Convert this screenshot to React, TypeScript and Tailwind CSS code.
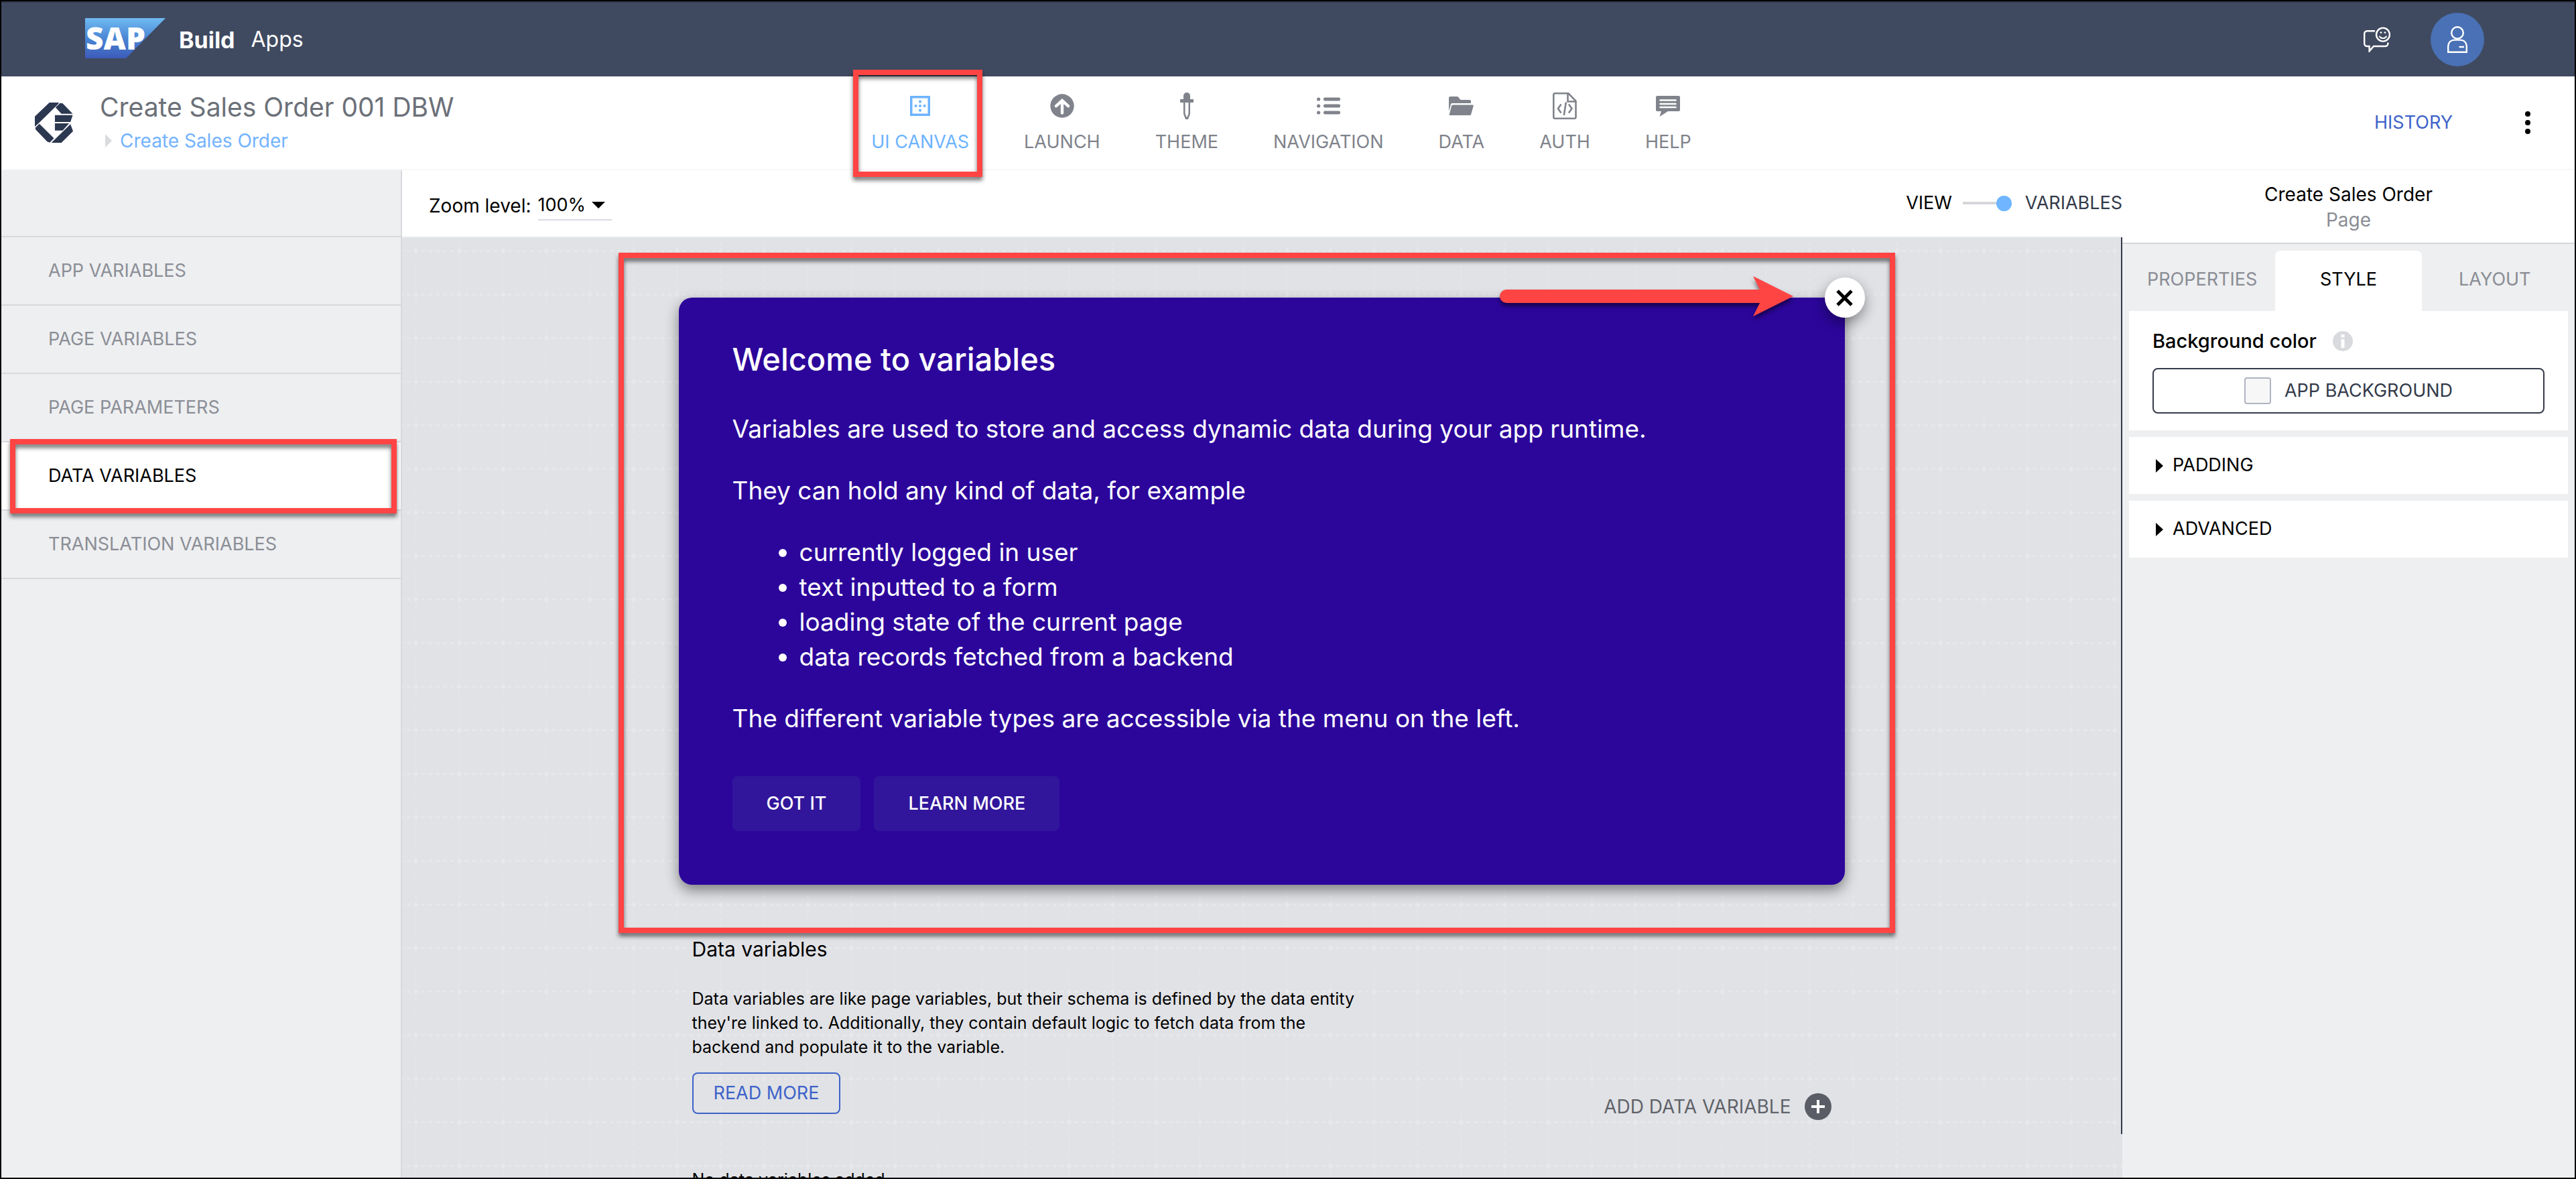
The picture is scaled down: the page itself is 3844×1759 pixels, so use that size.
import React from "react";

const HIGHLIGHT =
  "pointer-events-none absolute z-20 border-8 border-[#ff4444] drop-shadow-[0_5px_3px_rgba(0,0,0,0.55)]";

function SapLogo() {
  return (
    <svg width="120" height="60" viewBox="0 0 120 60" role="img" aria-label="SAP">
      <defs>
        <linearGradient id="sap" x1="0" y1="0" x2="0" y2="1">
          <stop offset="0" stopColor="#70baf3" />
          <stop offset="0.5" stopColor="#4a86d4" />
          <stop offset="1" stopColor="#3d5bba" />
        </linearGradient>
      </defs>
      <polygon points="0,0 120,0 61,60 0,60" fill="url(#sap)" />
      <text x="1" y="47" fontFamily="Open Sans, sans-serif" fontWeight="800" fontSize="46" fill="#fff">
        SAP
      </text>
    </svg>
  );
}

function AppLogo() {
  return (
    <svg width="57" height="60" viewBox="0 0 118 180" preserveAspectRatio="none" fill="#2c3850" aria-hidden="true">
      <polygon points="45,0 75,0 70,10 12,92 0,108 0,62" />
      <polygon points="78,2 86,4 117,50 82,50 64,22" />
      <polygon points="62,56 117,56 110,87 62,87" />
      <polygon points="62,93 106,93 86,125 62,125" />
      <polygon points="110,97 118,128 82,180 51,180" />
      <polygon points="14,95 59,160 46,179 38,175 2,120 2,112" />
    </svg>
  );
}

function FeedbackIcon() {
  return (
    <svg width="40" height="38" viewBox="0 0 40 38" fill="none" stroke="#fff" strokeWidth="2.4" aria-hidden="true">
      <path d="M17 6.2H5.2a4 4 0 0 0-4 4V25a4 4 0 0 0 4 4H8.6v7.4L15 29h17.4a4 4 0 0 0 4-4v-1.5" />
      <circle cx="29" cy="11.6" r="10" />
      <path d="M23.8 13.6c1.4 4.6 9 4.6 10.4 0" strokeWidth="2" />
      <circle cx="26" cy="8.6" r="1.4" fill="#fff" stroke="none" />
      <circle cx="32" cy="8.6" r="1.4" fill="#fff" stroke="none" />
    </svg>
  );
}

function PersonIcon() {
  return (
    <svg width="30" height="40" viewBox="0 0 30 40" fill="none" stroke="#fff" strokeWidth="2.4" aria-hidden="true">
      <circle cx="15" cy="10" r="8.8" />
      <path d="M1.2 38.8V31c0-6.500 4-10.400 10-10.400h7.600c6 0 10 3.900 10 10.400v7.800z" />
      <path d="M17.500 31h7.500" />
    </svg>
  );
}

const icons: Record<string, React.ReactNode> = {
  canvas: (
    <svg width="30" height="30" viewBox="0 0 30 30" fill="currentColor" aria-hidden="true">
      <path fillRule="evenodd" d="M0 0h30v30H0zM3.500 3.500v23h23v-23z" />
      <path d="M13.200 6.800h3.600v3.600h-3.600zM13.200 13.200h3.600v3.600h-3.600zM13.200 19.800h3.600v3.600h-3.600zM6.800 13.200h3.600v3.600H6.800zM19.800 13.200h3.600v3.600h-3.600z" />
    </svg>
  ),
  launch: (
    <svg width="36" height="36" viewBox="0 0 36 36" aria-hidden="true">
      <circle cx="18" cy="18" r="17.700" fill="currentColor" />
      <path d="M18 28.500V11.500M9 18.200l9-8.200 9 8.200" fill="none" stroke="#fff" strokeWidth="4.400" strokeLinecap="round" strokeLinejoin="miter" />
    </svg>
  ),
  theme: (
    <svg width="20" height="40" viewBox="0 0 20 40" fill="currentColor" aria-hidden="true">
      <path d="M5 11V5a5 5 0 0 1 10 0v6z" />
      <rect y="10" width="20" height="5" />
      <path fillRule="evenodd" d="M5 15h10v17l-3 8H8l-3-8zM7.500 15v16.500l2.500 6 2.500-6V15z" />
    </svg>
  ),
  navigation: (
    <svg width="35" height="26" viewBox="0 0 35 26" fill="currentColor" aria-hidden="true">
      {[0.5, 10.5, 20.5].map((y) => (
        <g key={y}>
          <circle cx="2.600" cy={y + 2.5} r="2.600" />
          <rect x="10" y={y} width="25" height="5" rx="2" />
        </g>
      ))}
    </svg>
  ),
  data: (
    <svg width="37" height="28" viewBox="0 0 37 28" fill="currentColor" aria-hidden="true">
      <path d="M0 22V2a2 2 0 0 1 2-2h10a3 3 0 0 1 2.500 1.300L17.500 5H31a2 2 0 0 1 2 2v3H5a2 2 0 0 0-2 1.600z" />
      <path d="M6 12.500h29a1.600 1.600 0 0 1 1.600 2l-3.400 12A2 2 0 0 1 31.500 28H.5L4 14a2 2 0 0 1 2-1.500z" />
    </svg>
  ),
  auth: (
    <svg width="36" height="40" viewBox="0 0 36 40" fill="none" stroke="currentColor" strokeWidth="2.600" aria-hidden="true">
      <path d="M3 1.300h20.500l11 11.500V37a1.700 1.700 0 0 1-1.700 1.700H3A1.700 1.700 0 0 1 1.300 37V3A1.700 1.700 0 0 1 3 1.300z" />
      <path d="M22.500 1.500v12h12" />
      <path d="M12.500 17.500L8 24l4.500 6.500M24 17.500l4.500 6.500-4.500 6.500M19.800 14.500l-3 19.500" />
    </svg>
  ),
  help: (
    <svg width="36" height="31" viewBox="0 0 36 31" aria-hidden="true">
      <path d="M2 0h32a2 2 0 0 1 2 2v19a2 2 0 0 1-2 2H18L5.500 31 8 23H2a2 2 0 0 1-2-2V2a2 2 0 0 1 2-2z" fill="currentColor" />
      <path d="M5.500 6.500h25M5.500 12h25M5.500 17h25" stroke="#fff" strokeWidth="2.400" />
    </svg>
  ),
};

const navItems = [
  { id: "canvas", label: "UI CANVAS" },
  { id: "launch", label: "LAUNCH" },
  { id: "theme", label: "THEME" },
  { id: "navigation", label: "NAVIGATION" },
  { id: "data", label: "DATA" },
  { id: "auth", label: "AUTH" },
  { id: "help", label: "HELP" },
];

const variableTabs = [
  "APP VARIABLES",
  "PAGE VARIABLES",
  "PAGE PARAMETERS",
  "DATA VARIABLES",
  "TRANSLATION VARIABLES",
];

function TopBar() {
  return (
    <header className="flex h-[112px] shrink-0 items-center border-t-2 border-[#33384a] bg-[#3f4a60] pr-[135px] pl-[125px] text-white">
      <div className="pb-1">
        <SapLogo />
      </div>
      <span className="pl-5 text-[34px] font-bold">Build</span>
      <span className="pl-6 text-[32px]">Apps</span>
      <div className="ml-auto flex items-center gap-[60px]">
        <button type="button" aria-label="Feedback">
          <FeedbackIcon />
        </button>
        <button type="button" aria-label="Account" className="flex size-20 items-center justify-center rounded-full bg-[#4a71b5]">
          <PersonIcon />
        </button>
      </div>
    </header>
  );
}

function ProjectBar() {
  return (
    <div className="grid h-[140px] shrink-0 grid-cols-[1fr_auto_1fr] border-b-2 border-[#f7f7f8] bg-white">
      <div className="flex pl-[50px]">
        <div className="self-center">
          <AppLogo />
        </div>
        <div className="pt-[22px] pl-10">
          <h1 className="text-[39px] leading-[48px] whitespace-nowrap text-[#6b7078]">Create Sales Order 001 DBW</h1>
          <nav aria-label="Breadcrumb" className="flex items-center gap-3 pt-2 pl-2">
            <svg width="10" height="20" viewBox="0 0 10 20" fill="#dadbdf" aria-hidden="true">
              <path d="M0 0l10 10L0 20z" />
            </svg>
            <a href="#page" className="text-[28px] leading-[36px] text-[#73b3ff]">
              Create Sales Order
            </a>
          </nav>
        </div>
      </div>
      <nav aria-label="Main" className="flex gap-[82px] pt-6 pr-5">
        {navItems.map(({ id, label }) => (
          <button
            key={id}
            type="button"
            className={`relative flex flex-col items-center self-start text-[27px] leading-[40px] ${
              id === "canvas" ? "text-[#6db3ff]" : "text-[#80838b]"
            }`}
          >
            <span className="mb-[14px] flex h-10 items-center justify-center">{icons[id]}</span>
            {label}
            {id === "canvas" && <span className={`${HIGHLIGHT} -top-[34px] -right-[20px] -bottom-[32px] -left-[27px]`} />}
          </button>
        ))}
      </nav>
      <div className="flex items-center justify-end gap-[92px] pr-[50px]">
        <button type="button" className="text-[27px] text-[#3d63c9]">
          HISTORY
        </button>
        <button type="button" aria-label="More" className="flex h-12 w-10 items-center justify-center">
          <svg width="8" height="36" viewBox="0 0 8 36" aria-hidden="true">
            <circle cx="4" cy="5" r="4" />
            <circle cx="4" cy="18" r="4" />
            <circle cx="4" cy="31" r="4" />
          </svg>
        </button>
      </div>
    </div>
  );
}

function Sidebar() {
  return (
    <nav aria-label="Variables" className="w-[598px] shrink-0 border-r-2 border-[#d8d9dd] bg-[#eeeff1]">
      <div className="h-[100px] border-b-2 border-[#d8d9dc]" />
      {variableTabs.map((label) => {
        const active = label === "DATA VARIABLES";
        return (
          <button
            key={label}
            type="button"
            className={`relative flex h-[102px] w-full items-center border-b-2 border-[#d8d9dc] pl-[70px] text-[27px] ${
              active ? "bg-white text-black" : "text-[#8b8e96]"
            }`}
          >
            {label}
            {active && <span className={`${HIGHLIGHT} -top-[5px] right-[6px] -bottom-[6px] left-[13px]`} />}
          </button>
        );
      })}
    </nav>
  );
}

function CanvasToolbar() {
  return (
    <div className="flex h-[100px] shrink-0 items-center justify-between border-b-2 border-[#f5f6f6] bg-white pl-10 text-[27px]">
      <div className="flex items-center gap-[10px] pt-2">
        <label htmlFor="zoom" className="text-[28px]">
          Zoom level:
        </label>
        <div className="relative w-[110px] border-b-2 border-[#d9dae0]">
          <select id="zoom" defaultValue="100%" className="h-[42px] w-full appearance-none bg-transparent text-[27px]">
            <option>100%</option>
          </select>
          <svg className="pointer-events-none absolute top-4 right-[10px]" width="20" height="10" viewBox="0 0 20 10" aria-hidden="true">
            <path d="M0 0h20L10 10z" />
          </svg>
        </div>
      </div>
      <div className="flex items-center gap-4">
        <span>VIEW</span>
        <button type="button" role="switch" aria-checked="true" aria-label="Show variables" className="flex items-center">
          <span className="h-1 w-[50px] bg-[#d6d7da]" />
          <span className="size-[23px] rounded-full bg-[#6fb5ff]" />
        </button>
        <span className="pl-1 text-[#333a4a]">VARIABLES</span>
      </div>
    </div>
  );
}

function CanvasGrid() {
  return (
    <svg className="absolute inset-0 size-full" aria-hidden="true">
      <defs>
        <pattern id="grid" width="65" height="65" patternUnits="userSpaceOnUse" x="-12" y="-12">
          <path d="M0 32.500H65" stroke="#e9eaeb" strokeWidth="2" strokeDasharray="5 5.833" strokeDashoffset="2.500" />
          <path d="M32.500 0V65" stroke="#e4e5e8" strokeWidth="2" strokeDasharray="5 5.833" strokeDashoffset="2.500" />
          <path d="M32.500 28v9M29 32.500h7" stroke="#e8e9eb" strokeWidth="2" />
        </pattern>
      </defs>
      <rect width="100%" height="100%" fill="url(#grid)" />
    </svg>
  );
}

function WelcomeDialog() {
  return (
    <section
      aria-labelledby="welcome"
      className="relative rounded-[20px] bg-[#2c069b] px-20 pt-[60px] pb-20 text-[37px] leading-[52px] text-white shadow-[0_8px_20px_rgba(0,0,0,0.45)]"
    >
      <h2 id="welcome" className="pb-[46px] text-[47px] leading-[64px] font-medium">
        Welcome to variables
      </h2>
      <p>Variables are used to store and access dynamic data during your app runtime.</p>
      <p className="pt-10">They can hold any kind of data, for example</p>
      <ul className="list-disc py-10 pl-[100px]">
        <li>currently logged in user</li>
        <li>text inputted to a form</li>
        <li>loading state of the current page</li>
        <li>data records fetched from a backend</li>
      </ul>
      <p>The different variable types are accessible via the menu on the left.</p>
      <div className="flex gap-5 pt-[60px] text-[27px] font-medium">
        <button type="button" className="h-[82px] rounded-lg bg-[#31169b] px-[51px]">
          GOT IT
        </button>
        <button type="button" className="h-[82px] rounded-lg bg-[#31169b] px-[51px]">
          LEARN MORE
        </button>
      </div>
      <button
        type="button"
        aria-label="Close"
        className="absolute -top-[30px] -right-[30px] flex size-[60px] items-center justify-center rounded-full bg-white shadow-[0_8px_20px_rgba(0,0,0,0.4)]"
      >
        <svg width="25" height="25" viewBox="0 0 25 25" aria-hidden="true">
          <path d="M2 2l21 21M23 2L2 23" stroke="#000" strokeWidth="5" />
        </svg>
      </button>
      <svg
        className="pointer-events-none absolute -top-8 right-[77px] drop-shadow-[0_5px_3px_rgba(0,0,0,0.5)]"
        width="438"
        height="60"
        viewBox="0 0 438 60"
        aria-hidden="true"
      >
        <path d="M10 20H388L378 0 438 30 378 60 388 40H10a10 10 0 0 1 0-20z" fill="#ff4444" />
      </svg>
      <div className={`${HIGHLIGHT} -top-[67px] -right-[75px] -bottom-[72px] -left-[90px]`} />
    </section>
  );
}

function Canvas() {
  return (
    <div className="relative flex min-h-0 flex-1 overflow-hidden bg-[#e1e2e6]">
      <CanvasGrid />
      <div className="relative min-w-0 flex-1 pt-[90px]">
        <div className="mx-auto w-[1740px]">
          <WelcomeDialog />
          <section className="px-5 pt-[76px] text-black">
            <h2 className="text-[30px] leading-[40px]">Data variables</h2>
            <div className="flex items-end justify-between pt-9">
              <div className="pb-[10px]">
                <p className="w-[1000px] text-[25px] leading-[36px]">
                  Data variables are like page variables, but their schema is defined by the data entity
                  <br />
                  they're linked to. Additionally, they contain default logic to fetch data from the
                  <br />
                  backend and populate it to the variable.
                </p>
                <button
                  type="button"
                  className="mt-5 flex h-[62px] items-center rounded-lg border-2 border-[#3d63c9] px-[30px] text-[27px] text-[#3d63c9]"
                >
                  READ MORE
                </button>
              </div>
              <button type="button" className="flex items-center gap-5 text-[28px] text-[#606369]">
                ADD DATA VARIABLE
                <span className="flex size-10 items-center justify-center rounded-full bg-[#5a5d65]">
                  <svg width="20" height="20" viewBox="0 0 20 20" aria-hidden="true">
                    <path d="M10 0v20M0 10h20" stroke="#fff" strokeWidth="4" />
                  </svg>
                </span>
              </button>
            </div>
            <p className="pt-[70px] text-[25px] leading-[36px]">No data variables added.</p>
          </section>
        </div>
      </div>
      <div className="relative mb-[65px] w-[2px] bg-[#333a47]" />
    </div>
  );
}

function DisclosureRow({ label }: { label: string }) {
  return (
    <button type="button" aria-expanded="false" className="flex h-[85px] items-center gap-[14px] bg-white pl-10 text-[27px]">
      <svg width="11" height="20" viewBox="0 0 11 20" aria-hidden="true">
        <path d="M0 0l11 10L0 20z" />
      </svg>
      {label}
    </button>
  );
}

function Inspector() {
  return (
    <aside className="w-[675px] shrink-0 bg-[#eeeff1]">
      <div className="h-[110px] border-b-2 border-[#d5d6d9] bg-white pt-[17px] text-center text-[28px] leading-[38px]">
        <h2>Create Sales Order</h2>
        <p className="text-[#8a8d94]">Page</p>
      </div>
      <div className="flex flex-col gap-[10px] p-[10px]">
        <div>
          <div role="tablist" className="grid h-[90px] grid-cols-3 text-[27px] text-[#8a8d94]">
            <button type="button" role="tab" aria-selected="false" className="pb-1">
              PROPERTIES
            </button>
            <button type="button" role="tab" aria-selected="true" className="rounded-t-lg bg-white pb-1 text-black">
              STYLE
            </button>
            <button type="button" role="tab" aria-selected="false" className="pb-1">
              LAYOUT
            </button>
          </div>
          <div className="bg-white px-[35px] py-[25px]">
            <div className="flex items-center gap-6">
              <span className="text-[29px] leading-[40px] font-medium">Background color</span>
              <svg width="30" height="30" viewBox="0 0 30 30" role="img" aria-label="Info">
                <circle cx="15" cy="15" r="15" fill="#d8dade" />
                <path d="M12.500 5h5v4.500h-5zM12.500 12h5v13h-5z" fill="#fff" />
              </svg>
            </div>
            <button
              type="button"
              className="mt-5 flex h-[68px] w-full items-center justify-center gap-5 rounded-lg border-2 border-[#363b4a] text-[27px] text-[#333a4a]"
            >
              <span className="size-10 rounded border-2 border-[#b0b4c2] bg-[#f7f7f7]" />
              APP BACKGROUND
            </button>
          </div>
        </div>
        <DisclosureRow label="PADDING" />
        <DisclosureRow label="ADVANCED" />
      </div>
    </aside>
  );
}

export default function App() {
  return (
    <div className="flex h-screen flex-col overflow-hidden border-2 border-black bg-white font-[Inter,sans-serif] text-black">
      <TopBar />
      <ProjectBar />
      <div className="flex min-h-0 flex-1">
        <Sidebar />
        <main className="flex min-w-0 flex-1 flex-col">
          <CanvasToolbar />
          <Canvas />
        </main>
        <Inspector />
      </div>
    </div>
  );
}
